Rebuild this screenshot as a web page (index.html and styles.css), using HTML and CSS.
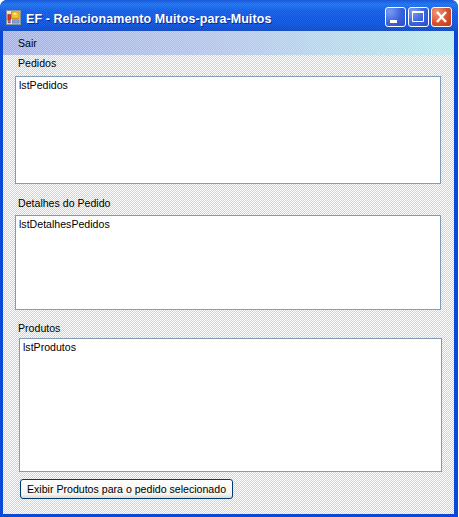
FILE: index.html
```html
<!DOCTYPE html>
<html lang="en">
<head>
  <meta charset="UTF-8">
  <title>EF - Relacionamento Muitos-para-Muitos</title>
  <link rel="stylesheet" href="styles.css">
</head>
<body>
  <div class="window">
    <div class="titlebar">
      <svg class="app-icon" width="15" height="15" viewBox="0 0 16 16">
        <rect x="0.5" y="0.5" width="15" height="15" fill="#e8e4d8" stroke="#8a8f9c"/>
        <rect x="6" y="2" width="8" height="7" fill="#f2c230" stroke="#c98a10"/>
        <rect x="8" y="3" width="3" height="2" fill="#fff3b0"/>
        <rect x="2" y="5" width="3" height="6" fill="#d8322a" stroke="#8c1a14" stroke-width="0.6"/>
        <rect x="2" y="12" width="3" height="2" fill="#7b4aa8"/>
        <rect x="7" y="10.5" width="7" height="3.5" fill="#7fa4d8" stroke="#4a6ca8" stroke-width="0.6"/>
      </svg>
      <span class="title">EF - Relacionamento Muitos-para-Muitos</span>
      <div class="controls">
        <div class="ctl ctl-blue">
          <svg width="19" height="18" viewBox="0 0 19 18"><rect x="4" y="12" width="7" height="3" fill="#fff"/></svg>
        </div>
        <div class="ctl ctl-blue">
          <svg width="19" height="18" viewBox="0 0 19 18"><path d="M3.5 4.5h11v9h-11z" fill="none" stroke="#fff"/><rect x="3" y="3" width="12" height="2" fill="#fff"/></svg>
        </div>
        <div class="ctl ctl-red">
          <svg width="19" height="18" viewBox="0 0 19 18"><path d="M5 4l9 10M14 4l-9 10" stroke="#fff" stroke-width="2.4" fill="none"/></svg>
        </div>
      </div>
    </div>
    <div class="client">
      <div class="menubar"><span class="menu-item">Sair</span></div>
      <div class="label label-pedidos">Pedidos</div>
      <div class="listbox list-pedidos">lstPedidos</div>
      <div class="label label-detalhes">Detalhes do Pedido</div>
      <div class="listbox list-detalhes">lstDetalhesPedidos</div>
      <div class="label label-produtos">Produtos</div>
      <div class="listbox list-produtos">lstProdutos</div>
      <button class="btn">Exibir Produtos para o pedido selecionado</button>
    </div>
  </div>
</body>
</html>
```

FILE: styles.css
```css
body {
  margin: 0;
  background-color: #ffffff;
  font-family: "Liberation Sans", Arial, sans-serif;
  font-size: 10.6px;
  color: #000000;
}

.window {
  width: 458px;
  height: 517px;
  box-sizing: border-box;
  display: flex;
  flex-direction: column;
  background-color: #0a48d8;
  border-radius: 7px 7px 0 0;
  padding-bottom: 3px;
}

.titlebar {
  height: 31px;
  flex-shrink: 0;
  box-sizing: border-box;
  display: flex;
  align-items: center;
  padding: 3px 6px 0 6px;
  border-radius: 7px 7px 0 0;
  background-image:
    url("data:image/svg+xml,%3Csvg xmlns='http://www.w3.org/2000/svg' width='2' height='2' shape-rendering='crispEdges'%3E%3Crect width='1' height='1' fill='%23ffffff' fill-opacity='.1'/%3E%3Crect x='1' y='1' width='1' height='1' fill='%23ffffff' fill-opacity='.1'/%3E%3C/svg%3E"),
    linear-gradient(to bottom, #0a50e0 0%, #1670f4 14%, #0a5aec 35%, #0450e4 80%, #0a46c8 100%);
}

.app-icon {
  flex-shrink: 0;
  margin-right: 5px;
}

.title {
  flex: 1;
  margin-top: 3px;
  font-family: "Liberation Sans", Arial, sans-serif;
  font-weight: bold;
  font-size: 12.5px;
  letter-spacing: 0.08px;
  color: #ffffff;
  text-shadow: 1px 1px 0 #0a2a90;
  white-space: nowrap;
}

.controls {
  display: flex;
  gap: 2px;
}

.ctl {
  width: 19px;
  height: 18px;
  border: 1px solid #ffffff;
  border-radius: 3px;
  overflow: hidden;
}

.ctl svg {
  display: block;
}

.ctl-blue {
  background: radial-gradient(circle at 20% 20%, #7c9cf0 0%, #3a62dc 55%, #2a4cc8 100%);
}

.ctl-red {
  background: radial-gradient(circle at 25% 25%, #f09878 0%, #d8502c 55%, #c03818 100%);
}

.client {
  flex: 1;
  margin: 0 4px 0 3px;
  display: flex;
  flex-direction: column;
  background-color: #ece9d8;
  background-image: url("data:image/svg+xml,%3Csvg xmlns='http://www.w3.org/2000/svg' width='4' height='4' shape-rendering='crispEdges'%3E%3Crect width='4' height='4' fill='%23ffffff'/%3E%3Crect x='1' width='1' height='1' fill='%23cfcdd2'/%3E%3Crect x='3' width='1' height='1' fill='%23cfcdd2'/%3E%3Crect y='1' width='1' height='1' fill='%23e8da90'/%3E%3Crect x='2' y='1' width='1' height='1' fill='%23ded0c8'/%3E%3Crect x='1' y='2' width='1' height='1' fill='%23cfcdd2'/%3E%3Crect x='3' y='2' width='1' height='1' fill='%23cfcdd2'/%3E%3Crect y='3' width='1' height='1' fill='%23ded0c8'/%3E%3Crect x='2' y='3' width='1' height='1' fill='%23e8da90'/%3E%3C/svg%3E");
}

.menubar {
  height: 24px;
  flex-shrink: 0;
  display: flex;
  align-items: center;
  background-image:
    url("data:image/svg+xml,%3Csvg xmlns='http://www.w3.org/2000/svg' width='2' height='2' shape-rendering='crispEdges'%3E%3Crect width='1' height='1' fill='%23ffffff' fill-opacity='.3'/%3E%3Crect x='1' y='1' width='1' height='1' fill='%23ffffff' fill-opacity='.3'/%3E%3C/svg%3E"),
    linear-gradient(to right, #a0aeea 0%, #aec4f0 50%, #b0ecf0 100%);
}

.menu-item {
  margin-left: 15px;
}

.label {
  height: 14px;
  line-height: 14px;
}

.listbox {
  background-color: #ffffff;
  border: 1px solid #7f9db9;
  box-sizing: border-box;
  padding: 1px 3px;
  line-height: 14px;
}

.label-pedidos {
  margin: 1px 0 0 15px;
}

.list-pedidos {
  margin: 6px 0 0 12px;
  width: 426px;
  height: 108px;
}

.label-detalhes {
  margin: 12px 0 0 15px;
}

.list-detalhes {
  margin: 5px 0 0 12px;
  width: 426px;
  height: 95px;
}

.label-produtos {
  margin: 11px 0 0 15px;
}

.list-produtos {
  margin: 3px 0 0 16px;
  width: 423px;
  height: 134px;
}

.btn {
  margin: 7px 0 0 17px;
  width: 213px;
  height: 20px;
  padding: 0;
  font-family: inherit;
  font-size: 10.6px;
  white-space: nowrap;
  color: #000000;
  background: linear-gradient(to bottom, #ffffff 0%, #f4f3ee 80%, #dcd8cc 100%);
  border: 1px solid #003c74;
  border-radius: 3px;
}
```
